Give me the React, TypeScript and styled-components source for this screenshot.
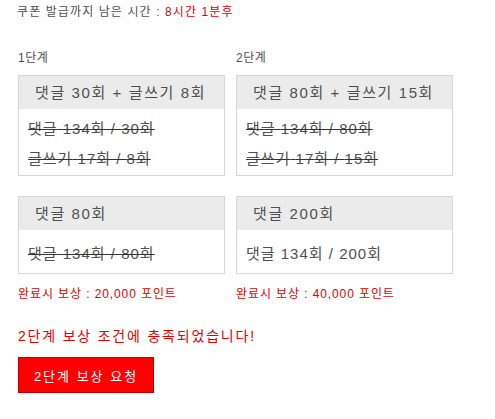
import styled, { createGlobalStyle } from "styled-components";

const GlobalStyle = createGlobalStyle`
  html, body {
    margin: 0;
    padding: 0;
    background: #fff;
  }
  body {
    font-family: "Liberation Sans", "Noto Sans CJK KR", sans-serif;
    color: #505050;
  }
`;

type Goal = { label: string; current: number; target: number };
type Mission = { title: string; goals: Goal[]; done: boolean };
type Stage = { name: string; width: number; missions: Mission[]; reward: string };

const stages: Stage[] = [
  {
    name: "1단계",
    width: 207,
    missions: [
      {
        title: "댓글 30회 + 글쓰기 8회",
        done: true,
        goals: [
          { label: "댓글", current: 134, target: 30 },
          { label: "글쓰기", current: 17, target: 8 },
        ],
      },
      {
        title: "댓글 80회",
        done: true,
        goals: [{ label: "댓글", current: 134, target: 80 }],
      },
    ],
    reward: "20,000",
  },
  {
    name: "2단계",
    width: 217,
    missions: [
      {
        title: "댓글 80회 + 글쓰기 15회",
        done: true,
        goals: [
          { label: "댓글", current: 134, target: 80 },
          { label: "글쓰기", current: 17, target: 15 },
        ],
      },
      {
        title: "댓글 200회",
        done: false,
        goals: [{ label: "댓글", current: 134, target: 200 }],
      },
    ],
    reward: "40,000",
  },
];

const App = () => {
  return (
    <>
      <GlobalStyle />
      <Page>
        <Countdown>
          쿠폰 발급까지 남은 시간 : <Red>8시간 1분후</Red>
        </Countdown>

        <StageRow>
          {stages.map((stage) => (
            <StageColumn key={stage.name} $width={stage.width}>
              <StageName>{stage.name}</StageName>
              <MissionList>
                {stage.missions.map((m) => (
                  <MissionCard key={m.title}>
                    <MissionTitle>{m.title}</MissionTitle>
                    <MissionBody>
                      {m.goals.map((g) => (
                        <GoalRow key={g.label} $done={m.done}>
                          {g.label} {g.current}회 / {g.target}회
                        </GoalRow>
                      ))}
                    </MissionBody>
                  </MissionCard>
                ))}
              </MissionList>
              <Reward>완료시 보상 : {stage.reward} 포인트</Reward>
            </StageColumn>
          ))}
        </StageRow>

        <Notice>2단계 보상 조건에 충족되었습니다!</Notice>
        <RequestButton type="button">2단계 보상 요청</RequestButton>
      </Page>
    </>
  );
};
export default App;

const Page = styled.div`
  padding: 4px 18px 20px;
`;

const Countdown = styled.div`
  font-size: 12px;
  line-height: 16px;
  letter-spacing: 1.1px;
  margin-left: -1px;
`;

const Red = styled.span`
  color: #e00000;
`;

const StageRow = styled.div`
  display: flex;
  gap: 11px;
  margin-top: 30px;
`;

const StageColumn = styled.div<{ $width: number }>`
  width: ${(p) => p.$width}px;
  display: flex;
  flex-direction: column;
`;

const StageName = styled.div`
  font-size: 12px;
  line-height: 16px;
  letter-spacing: 0.5px;
  margin-bottom: 9px;
`;

const MissionList = styled.div`
  display: flex;
  flex-direction: column;
  gap: 20px;
`;

const MissionCard = styled.div`
  border: 1px solid #d6d6d6;
  background: #fff;
`;

const MissionTitle = styled.div`
  background: #ebebeb;
  height: 33px;
  line-height: 33px;
  padding: 0 16px;
  font-size: 15px;
  letter-spacing: 1.6px;
  white-space: nowrap;
`;

const MissionBody = styled.div`
  box-sizing: border-box;
  min-height: 43px;
  padding: 5px 9px 1px;
  display: flex;
  flex-direction: column;
  justify-content: center;
`;

const GoalRow = styled.div<{ $done: boolean }>`
  font-size: 15px;
  line-height: 30px;
  letter-spacing: 1px;
  white-space: nowrap;
  text-decoration: ${(p) => (p.$done ? "line-through" : "none")};
  text-decoration-color: #333;
`;

const Reward = styled.div`
  margin-top: 12px;
  font-size: 12px;
  line-height: 16px;
  letter-spacing: 0.9px;
  color: #e00000;
`;

const Notice = styled.div`
  margin-top: 24px;
  font-size: 14px;
  line-height: 20px;
  letter-spacing: 1.8px;
  color: #e00000;
`;

const RequestButton = styled.button`
  margin-top: 11px;
  width: 136px;
  height: 36px;
  background: #ff0000;
  border: 1px solid #c00000;
  color: #fff;
  font-family: "Liberation Sans", "Noto Sans CJK KR", sans-serif;
  font-size: 13px;
  letter-spacing: 2px;
  cursor: pointer;
  padding: 0;
`;
